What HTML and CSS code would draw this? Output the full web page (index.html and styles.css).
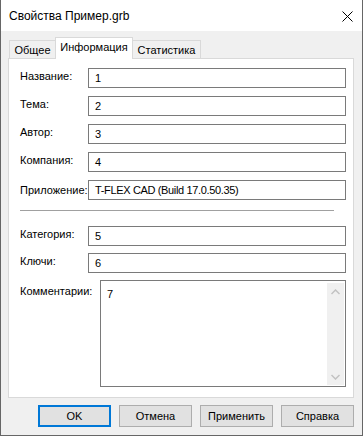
FILE: index.html
```html
<!DOCTYPE html>
<html lang="ru">
<head>
<meta charset="utf-8">
<title>Свойства Пример.grb</title>
<link rel="stylesheet" href="styles.css">
</head>
<body>
<div class="dialog">
  <div class="titlebar">
    <span class="title">Свойства Пример.grb</span>
    <svg class="close" width="11" height="11" viewBox="0 0 11 11"><path d="M0.5 0.5 L10.5 10.5 M10.5 0.5 L0.5 10.5" stroke="#000" stroke-width="1" fill="none"/></svg>
  </div>
  <div class="content">
    <div class="tabs">
      <div class="tab">Общее</div>
      <div class="tab active">Информация</div>
      <div class="tab">Статистика</div>
    </div>
    <div class="panel">
      <div class="row"><span class="label">Название:</span><div class="field">1</div></div>
      <div class="row"><span class="label">Тема:</span><div class="field">2</div></div>
      <div class="row"><span class="label">Автор:</span><div class="field">3</div></div>
      <div class="row"><span class="label">Компания:</span><div class="field">4</div></div>
      <div class="row"><span class="label low">Приложение:</span><div class="field app">T-FLEX CAD (Build 17.0.50.35)</div></div>
      <div class="sep"></div>
      <div class="row first"><span class="label">Категория:</span><div class="field">5</div></div>
      <div class="row gap7"><span class="label">Ключи:</span><div class="field">6</div></div>
      <div class="row gap7 comments">
        <span class="label">Комментарии:</span>
        <div class="memo">
          <div class="memo-text">7</div>
          <div class="scroll">
            <svg width="9" height="6" viewBox="0 0 9 6"><path d="M0.5 5 L4.5 1 L8.5 5" stroke="#c2c2c2" stroke-width="1.5" fill="none"/></svg>
            <svg width="9" height="6" viewBox="0 0 9 6"><path d="M0.5 1 L4.5 5 L8.5 1" stroke="#c2c2c2" stroke-width="1.5" fill="none"/></svg>
          </div>
        </div>
      </div>
    </div>
    <div class="buttons">
      <div class="btn default">OK</div>
      <div class="btn">Отмена</div>
      <div class="btn">Применить</div>
      <div class="btn">Справка</div>
    </div>
  </div>
</div>
</body>
</html>
```

FILE: styles.css
```css
html, body {
  margin: 0;
  padding: 0;
  background: #f0f0f0;
}
body {
  font-family: "Liberation Sans", Arial, sans-serif;
  font-size: 11px;
  color: #000;
}
.dialog {
  width: 363px;
  height: 436px;
  box-sizing: border-box;
  border-left: 1px solid #666;
  border-right: 1px solid #666;
  border-bottom: 1px solid #666;
  background: #f0f0f0;
  display: flex;
  flex-direction: column;
}
.titlebar {
  height: 31px;
  background: #fff;
  display: flex;
  align-items: center;
  justify-content: space-between;
  padding: 0 9px 0 8px;
  flex-shrink: 0;
}
.title {
  font-size: 12px;
  line-height: 16px;
}
.close {
  margin-top: 1px;
}
.content {
  padding: 6px 8px 0 7px;
}
.tabs {
  display: flex;
  height: 21px;
  align-items: flex-end;
  padding-left: 1px;
}
.tab {
  height: 18px;
  box-sizing: border-box;
  border: 1px solid #d9d9d9;
  border-bottom: none;
  background: #f0f0f0;
  line-height: 18px;
}
.tab:first-child {
  border-right: none;
  width: 46px;
  text-align: center;
  padding: 0;
}
.tab:last-child {
  border-left: none;
  width: 68px;
  text-align: center;
  padding: 0;
}
.tab.active {
  height: 22px;
  width: 78px;
  margin-bottom: -1px;
  background: #fff;
  padding: 0;
  text-align: center;
  line-height: 18px;
  position: relative;
  z-index: 1;
}
.panel {
  background: #fff;
  border: 1px solid #d9d9d9;
  height: 340px;
  box-sizing: border-box;
  padding: 9px 7px 0 11px;
  display: flex;
  flex-direction: column;
}
.row {
  display: flex;
  align-items: center;
  height: 20px;
  margin-top: 8px;
}
.row:first-child {
  margin-top: 0;
}
.row.first {
  margin-top: 15px;
}
.row.gap7 {
  margin-top: 7px;
}
.label {
  width: 68px;
  flex-shrink: 0;
  white-space: nowrap;
  position: relative;
  top: -2px;
}
.label.low {
  top: 0;
}
.field {
  flex: 1;
  height: 20px;
  box-sizing: border-box;
  border: 1px solid #7a7a7a;
  padding: 0 6px;
  line-height: 18px;
  white-space: nowrap;
}
.field.app {
  letter-spacing: -0.35px;
}
.sep {
  height: 1px;
  background: #a0a0a0;
  margin: 10px 12px 0 0;
}
.row.comments {
  height: 107px;
  align-items: flex-start;
}
.comments .label {
  width: 80px;
  top: 5px;
}
.memo {
  flex: 1;
  height: 107px;
  box-sizing: border-box;
  border: 1px solid #7a7a7a;
  display: flex;
  padding: 2px 1px 1px 0;
}
.memo-text {
  flex: 1;
  padding: 3px 6px;
  line-height: 16px;
}
.scroll {
  width: 17px;
  background: #f0f0f0;
  display: flex;
  flex-direction: column;
  justify-content: space-between;
  align-items: center;
  padding: 6px 0 5px;
  box-sizing: border-box;
}
.buttons {
  display: flex;
  justify-content: flex-end;
  gap: 8px;
  margin-top: 7px;
}
.btn {
  width: 73px;
  height: 22px;
  box-sizing: border-box;
  border: 1px solid #adadad;
  background: #e1e1e1;
  text-align: center;
  line-height: 20px;
}
.btn.default {
  border: 2px solid #0078d7;
  line-height: 18px;
}
```
